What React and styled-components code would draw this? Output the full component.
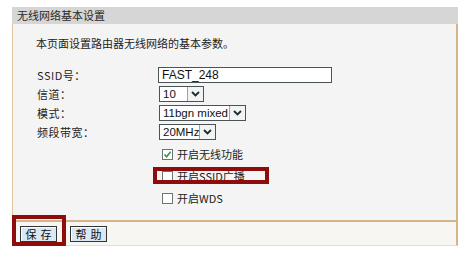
import React from 'react';
import styled, { createGlobalStyle } from 'styled-components';

const GlobalStyle = createGlobalStyle`
  html, body {
    margin: 0;
    padding: 0;
    background: #fff;
  }
  body {
    font-family: "Noto Sans CJK SC", "Liberation Sans", sans-serif;
    font-size: 11px;
    color: #222;
  }
`;

const Panel = styled.div`
  margin: 7px 0 0 12px;
  width: 446px;
`;

const Header = styled.div`
  height: 17px;
  line-height: 17px;
  background: #d6d6d6;
  padding-left: 5px;
  font-size: 11px;
  color: #2a2a2a;
`;

const Body = styled.div`
  height: 198px;
  box-sizing: border-box;
  background: #f4f4f4;
  border-left: 1px solid #e2c49e;
  border-right: 2px solid #d6b48a;
  border-bottom: 2px solid #d6b48a;
  padding: 12px 0 0 23px;
`;

const Intro = styled.div`
  height: 14px;
  line-height: 14px;
  font-size: 11px;
  color: #222;
`;

const Form = styled.div`
  margin-top: 15px;
  display: grid;
  grid-template-columns: 122px auto;
  grid-auto-rows: 19px;
  align-items: center;
  padding-left: 1px;
`;

const Label = styled.div`
  font-size: 11px;
  color: #1e1e1e;
  letter-spacing: 0.5px;
`;

const TextInput = styled.div`
  width: 174px;
  height: 16px;
  box-sizing: border-box;
  margin-left: -1px;
  border: 1px solid #4a5455;
  background: #fff;
  font-family: "Liberation Sans", Arial, sans-serif;
  font-size: 12px;
  line-height: 14px;
  padding-left: 3px;
  color: #111;
`;

const SelectBox = styled.div`
  width: ${({ w }) => w}px;
  height: 16px;
  box-sizing: border-box;
  border: 1px solid #4a5455;
  background: #fff;
  display: flex;
  align-items: stretch;
  font-family: "Liberation Sans", Arial, sans-serif;
  font-size: 11.5px;
  color: #111;
`;

const SelectValue = styled.div`
  flex: 1;
  line-height: 14px;
  padding-left: 3px;
  white-space: nowrap;
  overflow: hidden;
`;

const SelectArrow = styled.div`
  width: 15px;
  border-left: 1px solid #9aa3a6;
  background: #f2f4f4;
  display: flex;
  align-items: center;
  justify-content: center;
`;

const Checks = styled.div`
  margin-top: 2px;
  padding-left: 126px;
  display: flex;
  flex-direction: column;
`;

const CheckRow = styled.div`
  position: relative;
  height: 22px;
  display: flex;
  align-items: center;
  gap: 4px;
  font-size: 11px;
  color: #222;
`;

const Box = styled.div`
  width: 11px;
  height: 11px;
  box-sizing: border-box;
  border: 1px solid #6b7576;
  background: #fff;
  display: flex;
  align-items: center;
  justify-content: center;
`;

const Mark = styled.div`
  position: absolute;
  border: 4px solid #8e0c0c;
  box-sizing: border-box;
  left: ${({ x }) => x}px;
  top: ${({ y }) => y}px;
  width: ${({ w }) => w}px;
  height: ${({ h }) => h}px;
  pointer-events: none;
`;

const Footer = styled.div`
  position: relative;
  height: 24px;
  box-sizing: border-box;
  background: #f7f6f3;
  border-left: 1px solid #e2c49e;
  border-right: 2px solid #d6b48a;
  border-bottom: 1px solid #f1dcc2;
  display: flex;
  align-items: center;
  gap: 13px;
  padding-left: 7px;
`;

const Button = styled.div`
  width: 37px;
  height: 16px;
  box-sizing: border-box;
  border: 1px solid #333;
  background: #d9e8f2;
  box-shadow: inset 1px 1px 0 #fff;
  font-size: 11px;
  line-height: 14px;
  text-align: center;
  letter-spacing: 4px;
  text-indent: 4px;
  color: #111;
`;

const Arrow = () => (
  <svg width="9" height="6" viewBox="0 0 9 6">
    <path d="M1 1 L4.5 4.5 L8 1" fill="none" stroke="#1d2a2e" strokeWidth="1.8" />
  </svg>
);

const Tick = () => (
  <svg width="9" height="9" viewBox="0 0 9 9">
    <path d="M1.5 4.5 L3.6 6.8 L7.6 1.8" fill="none" stroke="#2f9a3a" strokeWidth="1.6" />
  </svg>
);

const Select = ({ w, value }) => (
  <SelectBox w={w}>
    <SelectValue>{value}</SelectValue>
    <SelectArrow>
      <Arrow />
    </SelectArrow>
  </SelectBox>
);

const App = () => {
  return (
    <>
      <GlobalStyle />
      <Panel>
        <Header>无线网络基本设置</Header>
        <Body>
          <Intro>本页面设置路由器无线网络的基本参数。</Intro>
          <Form>
            <Label>SSID号：</Label>
            <TextInput>FAST_248</TextInput>
            <Label>信道：</Label>
            <Select w={45} value="10" />
            <Label>模式：</Label>
            <Select w={87} value="11bgn mixed" />
            <Label>频段带宽：</Label>
            <Select w={57} value="20MHz" />
          </Form>
          <Checks>
            <CheckRow>
              <Box>
                <Tick />
              </Box>
              开启无线功能
            </CheckRow>
            <CheckRow>
              <Box />
              开启SSID广播
              <Mark x={-9} y={2} w={116} h={17} />
            </CheckRow>
            <CheckRow>
              <Box />
              开启WDS
            </CheckRow>
          </Checks>
        </Body>
        <Footer>
          <Button>保存</Button>
          <Button>帮助</Button>
          <Mark x={-1} y={-7} w={54} h={31} />
        </Footer>
      </Panel>
    </>
  );
};

export default App;
